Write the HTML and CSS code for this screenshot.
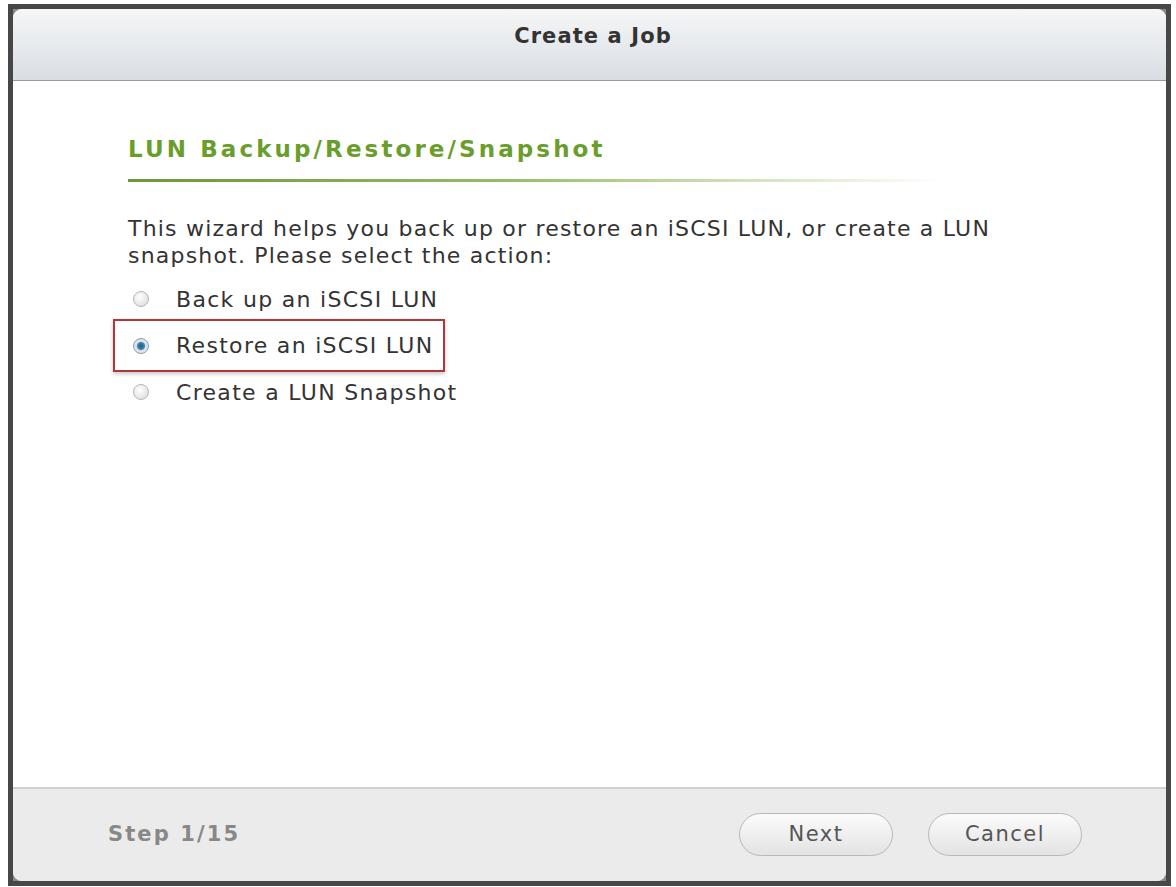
FILE: index.html
```html
<!DOCTYPE html>
<html lang="en">
<head>
    <meta charset="UTF-8" />
    <title>Create a Job</title>
    <link rel="stylesheet" href="styles.css">
</head>
<body>
    <div class="dialog">
        <div class="panel">
            <div class="header">Create a Job</div>

            <div class="content">
                <h2 class="section-title">LUN Backup/Restore/Snapshot</h2>
                <div class="title-rule"></div>

                <p class="intro">This wizard helps you back up or restore an iSCSI LUN, or create a LUN snapshot. Please select the action:</p>

                <div class="options">
                    <label class="option">
                        <span class="radio"></span>
                        <span>Back up an iSCSI LUN</span>
                    </label>
                    <label class="option selected">
                        <span class="radio checked"></span>
                        <span>Restore an iSCSI LUN</span>
                    </label>
                    <label class="option">
                        <span class="radio"></span>
                        <span>Create a LUN Snapshot</span>
                    </label>
                </div>
            </div>

            <div class="footer">
                <span class="step">Step 1/15</span>
                <div class="buttons">
                    <button class="btn">Next</button>
                    <button class="btn">Cancel</button>
                </div>
            </div>
        </div>
    </div>
</body>
</html>
```

FILE: styles.css
```css
body {
    margin: 0;
    background: #ffffff;
    font-family: "DejaVu Sans", Verdana, sans-serif;
    color: #333;
}

.dialog {
    margin: 4px 5px 0 8px;
    width: 1153px;
    height: 872px;
    border: 5px solid #474747;
    background: #8a8a8a;
}

.panel {
    height: 100%;
    display: flex;
    flex-direction: column;
    background: #ffffff;
    border-radius: 9px;
    overflow: hidden;
}

.header {
    height: 72px;
    flex-shrink: 0;
    display: flex;
    align-items: center;
    justify-content: center;
    background: linear-gradient(#f5f6f7, #d9dee4);
    border-bottom: 1px solid #9a9a9a;
    font-size: 21px;
    font-weight: bold;
    letter-spacing: 1.1px;
    color: #333;
    padding: 0 0 17px 7px;
    box-sizing: border-box;
}

.content {
    flex: 1;
    padding: 55px 0 0 115px;
}

.section-title {
    margin: 0;
    font-size: 23px;
    font-weight: bold;
    letter-spacing: 3.1px;
    color: #6a9e2c;
}

.title-rule {
    margin-top: 17px;
    width: 812px;
    height: 3px;
    background: linear-gradient(90deg, #6a9838, #94bb62 45%, rgba(200, 220, 180, 0) 100%);
}

.intro {
    margin: 33px 0 0 0;
    width: 920px;
    font-size: 22px;
    line-height: 27px;
    letter-spacing: 1.2px;
    color: #333;
}

.options {
    margin-top: 7px;
    display: flex;
    flex-direction: column;
    align-items: flex-start;
}

.option {
    display: flex;
    align-items: center;
    gap: 27px;
    height: 46px;
    padding-left: 5px;
    font-size: 22px;
    letter-spacing: 1.3px;
    color: #333;
    white-space: nowrap;
    box-sizing: border-box;
}

.option.selected {
    margin-left: -15px;
    padding-left: 18px;
    width: 332px;
    height: 53px;
    margin-top: -3px;
    margin-bottom: -3px;
    border: 2px solid #b23636;
    box-shadow: 0 2px 4px rgba(0, 0, 0, 0.22);
}

.radio {
    width: 16px;
    height: 16px;
    border-radius: 50%;
    border: 1px solid #b5b5b5;
    background: radial-gradient(circle at 40% 35%, #ffffff, #d8d8d8);
    box-sizing: border-box;
    flex-shrink: 0;
}

.radio.checked {
    border-color: #8a9aa8;
    background: radial-gradient(circle, #1f5f82 0, #3f86a8 3.5px, #d3dfe8 4.5px, #f4f7f9 100%);
}

.footer {
    height: 94px;
    flex-shrink: 0;
    display: flex;
    align-items: center;
    justify-content: space-between;
    background: #ebebeb;
    border-top: 2px solid #d0d0d0;
    box-sizing: border-box;
    padding: 0 84px 2px 95px;
}

.step {
    font-size: 21px;
    font-weight: bold;
    letter-spacing: 2.1px;
    color: #888;
}

.buttons {
    display: flex;
    gap: 35px;
}

.btn {
    width: 154px;
    height: 43px;
    border-radius: 22px;
    border: 1px solid #b8b8b8;
    background: linear-gradient(#fbfbfb, #e3e3e3);
    font-family: "DejaVu Sans", Verdana, sans-serif;
    font-size: 21px;
    letter-spacing: 1.5px;
    color: #555;
    cursor: pointer;
}
```
